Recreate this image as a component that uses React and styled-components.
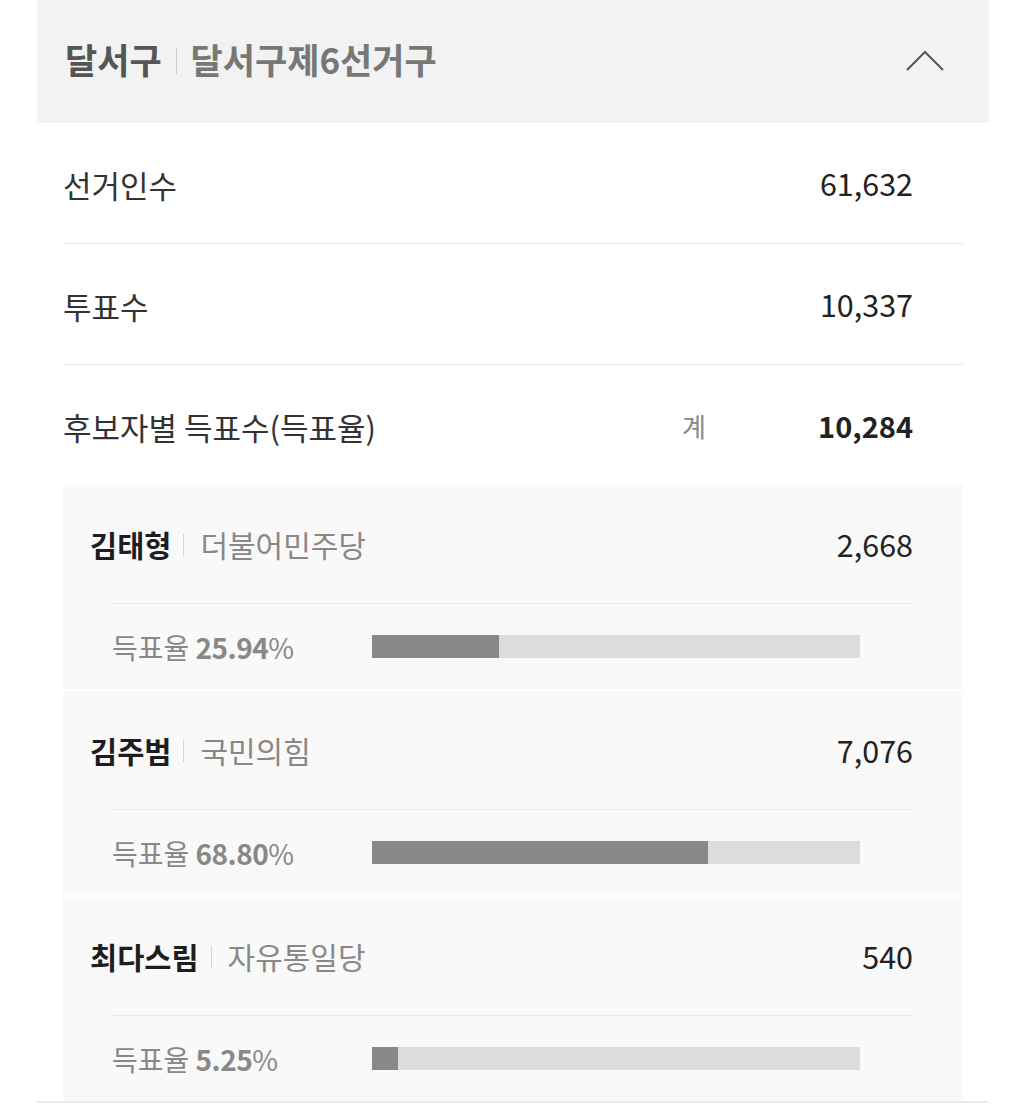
import React from 'react';
import styled, { createGlobalStyle } from 'styled-components';

const GlobalStyle = createGlobalStyle`
  html, body {
    margin: 0;
    padding: 0;
    background: #fff;
  }
  body {
    font-family: "Noto Sans CJK KR", "Noto Sans", sans-serif;
    color: #222;
  }
`;

const district = { gu: '달서구', name: '달서구제6선거구' };

const stats = [
  { label: '선거인수', value: '61,632' },
  { label: '투표수', value: '10,337' },
];

const total = '10,284';

const candidates = [
  { name: '김태형', party: '더불어민주당', votes: '2,668', rate: 25.94 },
  { name: '김주범', party: '국민의힘', votes: '7,076', rate: 68.8 },
  { name: '최다스림', party: '자유통일당', votes: '540', rate: 5.25 },
];

const ChevronUp = () => (
  <svg width="38" height="21" viewBox="0 0 38 21" fill="none">
    <path d="M1 20 L19 2 L37 20" stroke="#555" strokeWidth="2" />
  </svg>
);

const App = () => (
  <>
    <GlobalStyle />
    <Section>
      <Header>
        <Title>
          <Gu>{district.gu}</Gu>
          <Bar />
          <District>{district.name}</District>
        </Title>
        <Toggle>
          <ChevronUp />
        </Toggle>
      </Header>
      <Body>
        {stats.map((s) => (
          <Row key={s.label} divided>
            <Label>{s.label}</Label>
            <Value>{s.value}</Value>
          </Row>
        ))}
        <Row>
          <Label>후보자별 득표수(득표율)</Label>
          <TotalWrap>
            <TotalLabel>계</TotalLabel>
            <Value bold>{total}</Value>
          </TotalWrap>
        </Row>
        <CandidateList>
          {candidates.map((c) => (
            <Candidate key={c.name}>
              <NameRow>
                <NameWrap>
                  <Name>{c.name}</Name>
                  <SmallBar />
                  <Party>{c.party}</Party>
                </NameWrap>
                <Value>{c.votes}</Value>
              </NameRow>
              <RateRow>
                <RateLabel>
                  득표율 <strong>{c.rate.toFixed(2)}</strong>%
                </RateLabel>
                <Track>
                  <Fill style={{ width: `${c.rate}%` }} />
                </Track>
              </RateRow>
            </Candidate>
          ))}
        </CandidateList>
      </Body>
    </Section>
  </>
);

export default App;

const Section = styled.section`
  width: 952px;
  margin-left: 37px;
`;

const Header = styled.header`
  height: 123px;
  background: #f2f2f2;
  display: flex;
  align-items: center;
  justify-content: space-between;
  padding: 0 45px 0 28px;
  box-sizing: border-box;
`;

const Title = styled.h2`
  margin: 0 0 6px;
  display: flex;
  align-items: center;
  font-size: 35px;
  font-weight: 700;
`;

const Gu = styled.span`
  color: #555;
`;

const District = styled.span`
  color: #777;
`;

const Bar = styled.i`
  display: inline-block;
  width: 1px;
  height: 26px;
  background: #ccc;
  margin: 4px 14px 0 14px;
`;

const SmallBar = styled(Bar)`
  height: 22px;
  margin: 2px 16px 0 12px;
  background: #d6d6d6;
`;

const Toggle = styled.button`
  border: 0;
  background: none;
  padding: 0;
  display: flex;
  margin-top: -3px;
`;

const Body = styled.div`
  padding: 0 26px;
  border-bottom: 2px solid #ececec;
`;

const Row = styled.div`
  height: 120px;
  display: flex;
  align-items: center;
  justify-content: space-between;
  padding-right: 50px;
  border-bottom: ${({ divided }) => (divided ? '1px solid #e6e6e6' : '0')};
`;

const Label = styled.span`
  font-size: 31px;
  color: #333;
  padding-top: 2px;
`;

const Value = styled.span`
  font-size: ${({ bold }) => (bold ? '29px' : '30.5px')};
  color: #222;
  font-weight: ${({ bold }) => (bold ? 700 : 400)};
`;

const TotalWrap = styled.div`
  display: flex;
  align-items: center;
`;

const TotalLabel = styled.span`
  font-size: 26px;
  color: #888;
  margin-right: 112px;
`;

const CandidateList = styled.div`
  display: flex;
  flex-direction: column;
  gap: 2px;
`;

const Candidate = styled.div`
  background: #f9f9f9;
`;

const NameRow = styled.div`
  height: 118px;
  display: flex;
  align-items: center;
  justify-content: space-between;
  padding: 0 50px 0 27px;
`;

const NameWrap = styled.div`
  display: flex;
  align-items: center;
`;

const Name = styled.span`
  font-size: 29.5px;
  font-weight: 700;
  color: #1e1e1e;
`;

const Party = styled.span`
  font-size: 30px;
  color: #888;
`;

const RateRow = styled.div`
  margin: 0 50px 0 49px;
  height: 86px;
  box-sizing: border-box;
  border-top: 1px solid #e8e8e8;
  display: flex;
  align-items: center;
`;

const RateLabel = styled.span`
  width: 260px;
  font-size: 28px;
  color: #888;
  strong {
    font-weight: 700;
    letter-spacing: -0.5px;
  }
`;

const Track = styled.div`
  width: 488px;
  height: 23px;
  background: #dcdcdc;
`;

const Fill = styled.div`
  height: 100%;
  background: #888;
`;
